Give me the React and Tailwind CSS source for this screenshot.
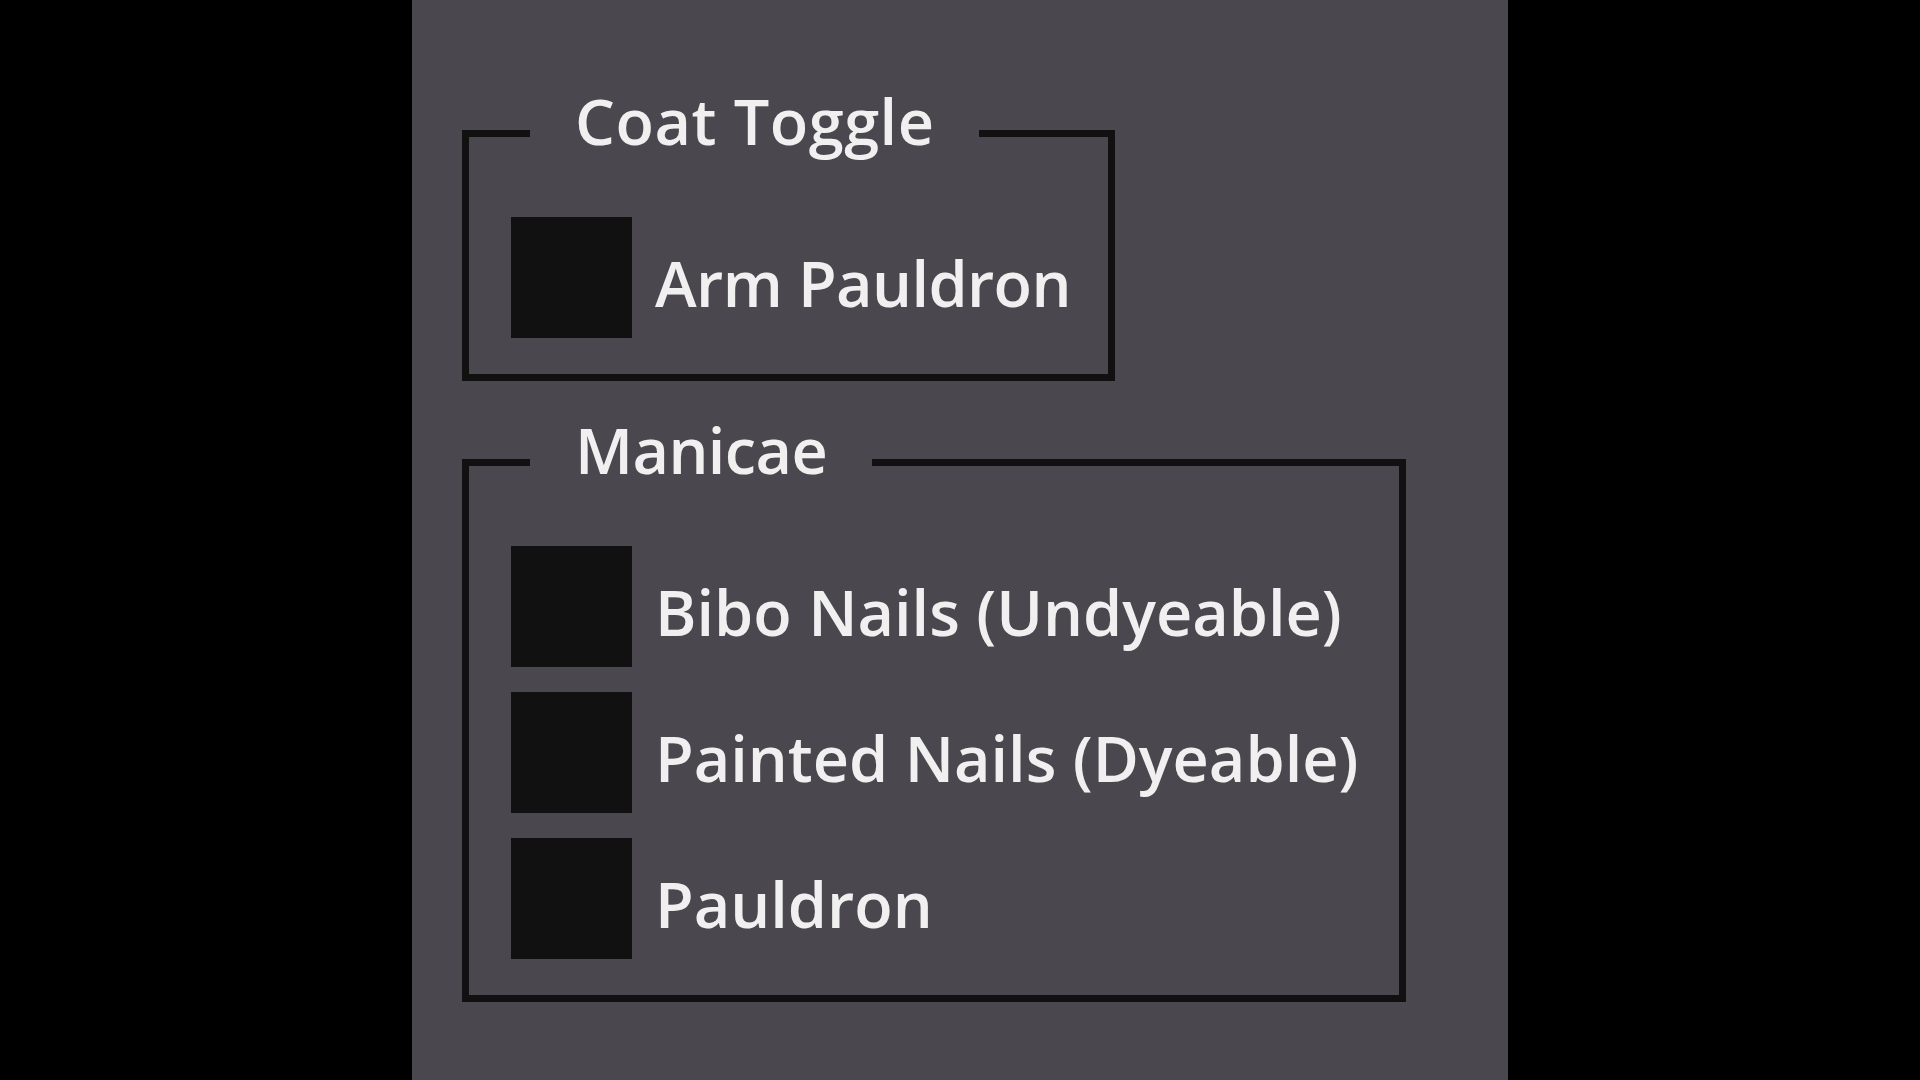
export default function App() {
  const font = { fontFamily: '"Open Sans", "Noto Sans", sans-serif' };
  const Check = () => <div className="w-[121px] h-[121px] shrink-0 bg-[#111111]" />;
  const Row = ({ label, extra = "" }) => (
    <div className="flex items-center gap-[23px]">
      <Check />
      <span className={`pt-[10px] text-[63px] leading-none font-semibold text-[#f0f0f0] whitespace-nowrap ${extra}`}>{label}</span>
    </div>
  );
  const Box = ({ title, width, titleExtra, children }) => (
    <div className={`relative border-[7px] border-[#111111] pl-[42px] pt-[80px] pb-[36px] ${width}`}>
      <span className={`absolute left-[61px] top-[-48px] px-[45px] bg-[#4a474e] text-[63px] leading-none font-semibold text-[#f0f0f0] whitespace-nowrap ${titleExtra}`}>
        {title}
      </span>
      <div className="flex flex-col gap-[25px]">{children}</div>
    </div>
  );
  return (
    <div className="w-full h-[1080px] bg-black flex justify-center overflow-hidden" style={font}>
      <div className="w-[1096px] h-full bg-[#4a474e] pt-[130px] pl-[50px] flex flex-col gap-[78px]">
        <Box title="Coat Toggle" width="w-[653px]" titleExtra="tracking-[0.5px]">
          <Row label="Arm Pauldron" extra="tracking-[-0.6px]" />
        </Box>
        <Box title="Manicae" width="w-[944px]" titleExtra="tracking-[-0.6px]">
          <Row label="Bibo Nails (Undyeable)" />
          <Row label="Painted Nails (Dyeable)" />
          <Row label="Pauldron" />
        </Box>
      </div>
    </div>
  );
}
